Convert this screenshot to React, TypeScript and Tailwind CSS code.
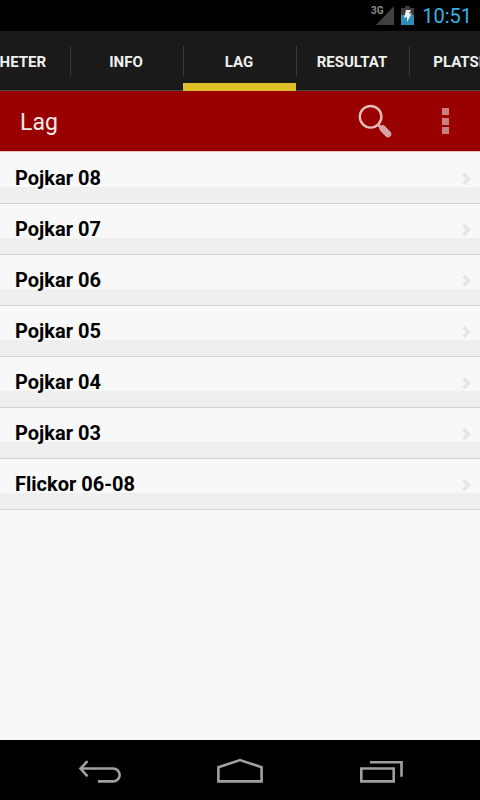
import clsx from "clsx";

const tabs = ["Nyheter", "Info", "Lag", "Resultat", "Platser"];

const teams = [
    "Pojkar 08",
    "Pojkar 07",
    "Pojkar 06",
    "Pojkar 05",
    "Pojkar 04",
    "Pojkar 03",
    "Flickor 06-08",
];

const StatusBar = () => {
    return (
        <div className="flex h-[31px] shrink-0 items-center justify-end bg-black pr-2">
            <svg width="26" height="22" viewBox="0 0 26 22" className="mr-1">
                <path d="M24 1V20H6Z" fill="#404040" />
                <text
                    x="1"
                    y="9"
                    fontSize="10"
                    fontWeight="700"
                    fontFamily="Roboto"
                    fill="#8c8c8c"
                    stroke="#000"
                    strokeWidth="2"
                    paintOrder="stroke"
                >
                    3G
                </text>
            </svg>
            <svg width="18" height="22" viewBox="0 0 18 22" className="mr-1">
                <path d="M1 3H5V1H10V3H14V10H1Z" fill="#3d3d3d" />
                <path d="M1 10H14V20H1Z" fill="#2d8fb5" />
                <path
                    d="M6 5H11L9 9L12 8L7 17V12L4 13Z"
                    fill="#f0f0f0"
                />
            </svg>
            <span className="text-xl leading-6 text-[#33b5e5]">10:51</span>
        </div>
    );
};

const TabBar = () => {
    return (
        <nav className="flex h-[60px] shrink-0 justify-center overflow-hidden bg-[#1a1a1a] pr-0.5">
            {tabs.map((tab, index) => {
                const active = tab === "Lag";
                return (
                    <button
                        key={tab}
                        type="button"
                        className={clsx(
                            "relative w-[113px] shrink-0 text-center text-[15px] font-bold text-[#f0f0f0] uppercase",
                            active
                                ? "border-b-8 border-[#dfbf27] pt-[10px]"
                                : "border-b border-[#4a4a4a] pt-[3px]"
                        )}
                    >
                        {index > 0 && (
                            <span className="absolute top-[15px] left-0 h-[30px] w-px bg-[#3a3a3a]" />
                        )}
                        {tab}
                    </button>
                );
            })}
        </nav>
    );
};

const ActionBar = () => {
    return (
        <header className="flex h-[61px] shrink-0 items-center border-b border-[#e5c8c8] bg-[#990000] px-5">
            <h1 className="flex-1 pt-1 text-[23px] text-[#f3eaea]">Lag</h1>
            <button type="button" aria-label="Sök" className="mr-9">
                <svg width="36" height="36" viewBox="0 0 36 36" fill="none">
                    <circle
                        cx="12.6"
                        cy="13.8"
                        r="10.8"
                        stroke="#e3bcbc"
                        strokeWidth="2.4"
                    />
                    <path d="M20 21.5L24 25.5" stroke="#dcb0b0" strokeWidth="3" />
                    <path
                        d="M24.8 25.6L30 31"
                        stroke="#d9a3a3"
                        strokeWidth="6.6"
                        strokeLinecap="round"
                    />
                </svg>
            </button>
            <button type="button" aria-label="Fler val">
                <svg width="30" height="36" viewBox="0 0 30 36" fill="#cc8080">
                    <rect x="12" y="5" width="7" height="7" />
                    <rect x="12" y="15" width="7" height="7" />
                    <rect x="12" y="24" width="7" height="7" />
                </svg>
            </button>
        </header>
    );
};

const TeamList = () => {
    return (
        <ul className="flex-1 bg-[#f8f8f8] pt-px">
            {teams.map((team) => (
                <li key={team}>
                    <a
                        href="#"
                        className="flex h-[51px] items-center justify-between border-b border-[#d2d2d2] bg-linear-to-b from-[#f8f8f8] from-[34px] to-[#efefef] to-[34px] pr-2 pl-[15px] text-xl font-bold text-black"
                    >
                        {team}
                        <svg
                            width="12"
                            height="14"
                            viewBox="0 0 12 14"
                            fill="none"
                            className="mt-0.5"
                        >
                            <path
                                d="M3.5 2L8.5 7L3.5 12"
                                stroke="#e4e5e8"
                                strokeWidth="3.6"
                            />
                        </svg>
                    </a>
                </li>
            ))}
        </ul>
    );
};

const NavigationBar = () => {
    return (
        <footer className="flex h-[60px] shrink-0 items-center justify-center gap-[93px] bg-black">
            <button type="button" aria-label="Tillbaka">
                <svg
                    width="48"
                    height="30"
                    viewBox="0 0 48 30"
                    fill="none"
                    stroke="#a0a0a0"
                    strokeWidth="2.6"
                >
                    <path d="M6 13.5H38.2A6.4 6.4 0 0 1 38.2 26.4H23" />
                    <path d="M12.5 6.2L5.5 13.5L12.5 21.3" />
                </svg>
            </button>
            <button type="button" aria-label="Hem">
                <svg
                    width="48"
                    height="30"
                    viewBox="0 0 48 30"
                    fill="none"
                    stroke="#a0a0a0"
                    strokeWidth="2.6"
                >
                    <path d="M2.4 26.4V12.3L24 5L45.6 12.3V26.4Z" />
                </svg>
            </button>
            <button type="button" aria-label="Senaste appar">
                <svg
                    width="48"
                    height="30"
                    viewBox="0 0 48 30"
                    fill="none"
                    stroke="#a0a0a0"
                    strokeWidth="2.6"
                >
                    <path d="M4.3 13.5H36.7V26.4H4.3Z" />
                    <path d="M13 7.3H44.5V21.8" />
                </svg>
            </button>
        </footer>
    );
};

const App = () => {
    return (
        <div className="flex min-h-screen flex-col font-[Roboto,sans-serif]">
            <StatusBar />
            <TabBar />
            <ActionBar />
            <TeamList />
            <NavigationBar />
        </div>
    );
};

export default App;
